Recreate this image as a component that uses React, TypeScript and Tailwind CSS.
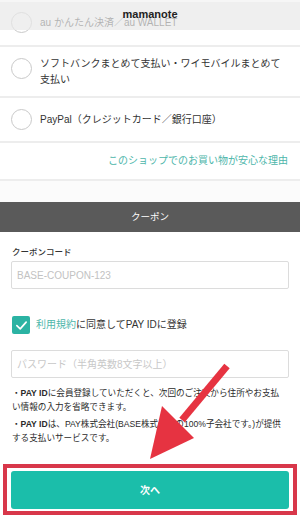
import React from 'react';

const font = "font-['Liberation_Sans','Noto_Sans_CJK_JP',sans-serif]";

function Radio() {
  return <span className="block w-[21px] h-[21px] shrink-0 rounded-full border-[1.5px] border-[#c9c9c9] bg-white" />;
}

export default function App() {
  return (
    <div className={`relative w-[300px] h-[519px] overflow-hidden bg-white text-[#333] ${font}`}>
      {/* payment methods */}
      <div className="flex items-center gap-[8px] px-[11px] h-[47px] border-b-2 border-[#ededed]">
        <Radio />
        <span className="text-[10px] leading-[14px]">au かんたん決済／au WALLET</span>
      </div>
      <div className="flex items-center gap-[8px] px-[11px] h-[51px] border-b-2 border-[#ededed]">
        <span className="block shrink-0 -mt-[6px]">
          <Radio />
        </span>
        <span className="text-[10px] leading-[16px]">
          ソフトバンクまとめて支払い・ワイモバイルまとめて
          <br />
          支払い
        </span>
      </div>
      <div className="flex items-center gap-[8px] px-[11px] h-[45px] border-b-2 border-[#ededed]">
        <Radio />
        <span className="text-[10px] leading-[14px]">PayPal（クレジットカード／銀行口座）</span>
      </div>
      <div className="flex items-center justify-end pr-[12px] h-[38px] border-b-2 border-[#ededed]">
        <span className="text-[10px] leading-[14px] text-[#4db6aa]">このショップでのお買い物が安心な理由</span>
      </div>
      <div className="h-[21px] bg-[#fbfbfb]" />

      {/* coupon */}
      <div className="h-[30px] flex items-center justify-center bg-[#5a5a5a] text-white text-[9.5px]">クーポン</div>
      <div className="px-[11px] pt-[13px]">
        <div className="text-[8.5px] leading-[14px] font-medium pl-[1px]">クーポンコード</div>
        <div className="mt-[2px] h-[28px] flex items-center px-[5px] border border-[#dcdcdc] rounded-[2px] text-[10px] text-[#c2c2c2]">
          BASE-COUPON-123
        </div>

        <div className="mt-[27px] flex items-center gap-[6px] pl-[1px]">
          <span className="w-[18px] h-[18px] rounded-[2px] bg-[#2bb3a3] flex items-center justify-center">
            <svg width="13" height="13" viewBox="0 0 14 14" fill="none">
              <path d="M2 7.2 L5.6 10.6 L12 3.4" stroke="white" strokeWidth="1.8" strokeLinecap="round" strokeLinejoin="round" />
            </svg>
          </span>
          <span className="text-[10px] leading-[14px]">
            <span className="text-[#4db6aa]">利用規約</span>に同意してPAY IDに登録
          </span>
        </div>

        <div className="mt-[16px] h-[28px] flex items-center px-[5px] border border-[#dcdcdc] rounded-[2px] text-[10px] text-[#c8c8c8]">
          パスワード（半角英数8文字以上）
        </div>

        <div className="mt-[8px] text-[8.6px] leading-[14px] pl-[1px] whitespace-nowrap text-[#2a2a2a]">
          <p>
            ・<b>PAY ID</b>に会員登録していただくと、次回のご注文から住所やお支払
            <br />
            い情報の入力を省略できます。
          </p>
          <p className="mt-[3px]">
            ・<b>PAY ID</b>は、PAY株式会社(BASE株式会社の100%子会社です。)が提供
            <br />
            する支払いサービスです。
          </p>
        </div>
      </div>

      {/* next button with annotation box */}
      <div className="mt-[19px] mx-[3px] border-4 border-[#d8374a] px-[4px] pt-[3px] pb-[2px]">
        <button className="w-full h-[38px] rounded-[3px] bg-[#1bbeaa] text-white text-[10px] font-bold">次へ</button>
      </div>

      {/* translucent header */}
      <div className="absolute top-0 left-0 right-0 h-[30px] bg-[#e8e8e8]/70 border-t-2 border-[#f6f6f6]">
        <div className="text-center text-[11px] font-bold text-[#222] leading-[14px] pt-[5px]">mamanote</div>
      </div>

      {/* annotation arrow */}
      <svg className="absolute inset-0 pointer-events-none" width="300" height="519" viewBox="0 0 300 519">
        <line x1="227" y1="366" x2="182" y2="420" stroke="#e63341" strokeWidth="7" />
        <polygon points="150,459 162,406 194,438" fill="#e63341" />
      </svg>
    </div>
  );
}
